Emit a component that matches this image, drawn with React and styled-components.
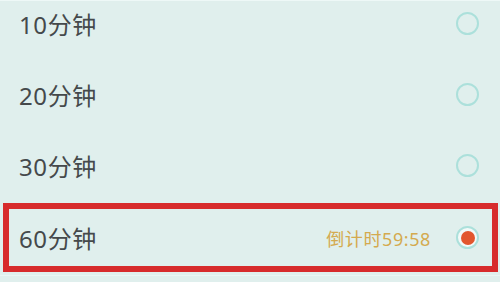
import React from "react";
import styled, { createGlobalStyle } from "styled-components";

const Global = createGlobalStyle`
  html, body {
    margin: 0;
    padding: 0;
    background: #e0efed;
    overflow: hidden;
  }
  body {
    font-family: "Noto Sans", "Noto Sans CJK SC", sans-serif;
  }
`;

const Page = styled.div`
  width: 500px;
  height: 282px;
  overflow: hidden;
  background: #e0efed;
  border-top: 1px solid #eef8f7;
  box-sizing: border-box;
`;

const List = styled.div`
  display: flex;
  flex-direction: column;
  margin-top: -13px;
`;

const Row = styled.div`
  display: flex;
  align-items: center;
  box-sizing: border-box;
  height: ${(p) => (p.$boxed ? "69px" : "71px")};
  margin: ${(p) => (p.$boxed ? "2px 2px 0 3px" : "0")};
  padding: ${(p) => (p.$boxed ? "0 13px 0 10px" : "0 21px 0 19px")};
  border: ${(p) => (p.$boxed ? "6px solid #d72b2c" : "none")};
`;

const Label = styled.span`
  flex: 1;
  font-size: 24px;
  color: #45494b;
  letter-spacing: 0.6px;
`;

const Timer = styled.span`
  font-size: 18px;
  color: #d4aa4f;
  letter-spacing: 0.6px;
  margin-right: 25px;
`;

const Radio = styled.span`
  width: 23px;
  height: 23px;
  box-sizing: border-box;
  border-radius: 50%;
  border: 2px solid #ace0db;
  display: flex;
  align-items: center;
  justify-content: center;
  background: ${(p) => (p.$checked ? "#f3f9f8" : "transparent")};
`;

const Dot = styled.span`
  width: 14px;
  height: 14px;
  border-radius: 50%;
  background: #e2562e;
`;

const Separator = styled.div`
  height: 1px;
  margin-top: 3px;
  background: #eaf6f4;
`;

const items = [
  { label: "10分钟" },
  { label: "20分钟" },
  { label: "30分钟" },
  { label: "60分钟", selected: true, timer: "倒计时59:58" },
];

export default function App() {
  return (
    <Page>
      <Global />
      <List>
        {items.map((it) => (
          <Row key={it.label} $boxed={it.selected}>
            <Label>{it.label}</Label>
            {it.timer && <Timer>{it.timer}</Timer>}
            <Radio $checked={it.selected}>{it.selected && <Dot />}</Radio>
          </Row>
        ))}
        <Separator />
      </List>
    </Page>
  );
}
